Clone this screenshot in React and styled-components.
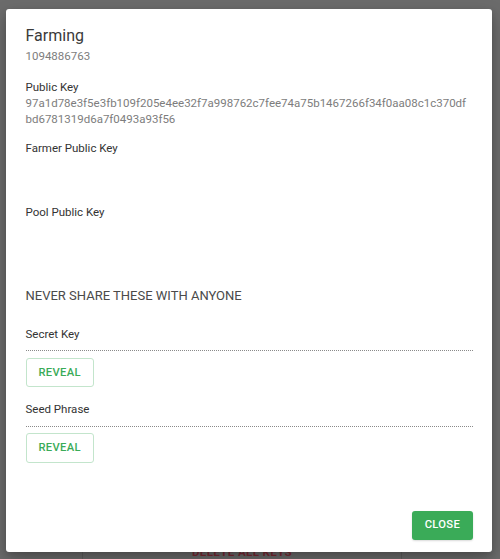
import React from "react";
import styled, { createGlobalStyle } from "styled-components";

const GlobalStyle = createGlobalStyle`
  html, body {
    margin: 0;
    padding: 0;
    width: 500px;
    height: 559px;
    overflow: hidden;
    font-family: Roboto, "Liberation Sans", Arial, sans-serif;
  }
`;

const keys = {
    fingerprint: "1094886763",
    publicKey: "97a1d78e3f5e3fb109f205e4ee32f7a998762c7fee74a75b1467266f34f0aa08c1c370dfbd6781319d6a7f0493a93f56",
};

const App = () => {
    return (
        <React.Fragment>
            <GlobalStyle/>
            <Backdrop>
                <BehindCard>
                    <DangerText>Delete All Keys</DangerText>
                </BehindCard>
                <Dialog>
                    <Content>
                        <Title>Farming</Title>
                        <Subtitle>{keys.fingerprint}</Subtitle>

                        <Section>
                            <Label>Public Key</Label>
                            <Value>{keys.publicKey}</Value>
                        </Section>
                        <Section>
                            <Label>Farmer Public Key</Label>
                            <Value empty/>
                        </Section>
                        <Section>
                            <Label>Pool Public Key</Label>
                            <Value empty/>
                        </Section>

                        <Warning>NEVER SHARE THESE WITH ANYONE</Warning>

                        <SecretRow first>
                            <Label>Secret Key</Label>
                            <Dotted/>
                            <RevealButton>Reveal</RevealButton>
                        </SecretRow>
                        <SecretRow>
                            <Label>Seed Phrase</Label>
                            <Dotted/>
                            <RevealButton>Reveal</RevealButton>
                        </SecretRow>
                    </Content>
                    <Actions>
                        <CloseButton>Close</CloseButton>
                    </Actions>
                </Dialog>
            </Backdrop>
        </React.Fragment>
    );
};

const Backdrop = styled.div`
  position: fixed;
  inset: 0;
  background-color: #6b6b6b;
`;

const BehindCard = styled.div`
  position: absolute;
  left: 82px;
  top: 530px;
  width: 320px;
  height: 40px;
  border-left: 1px solid #5d5d5d;
  border-right: 1px solid #5d5d5d;
  display: flex;
  justify-content: center;
  padding-top: 15px;
  box-sizing: border-box;
`;

const DangerText = styled.span`
  font-size: 11.5px;
  line-height: 14px;
  font-weight: 700;
  letter-spacing: 0.4px;
  text-transform: uppercase;
  color: #7a2a35;
`;

const Dialog = styled.div`
  position: absolute;
  left: 6px;
  top: 9px;
  width: 486px;
  height: 543px;
  background: #fff;
  border-radius: 3px;
  box-shadow: 0 9px 20px rgba(0, 0, 0, 0.22), 0 3px 6px rgba(0, 0, 0, 0.15);
  display: flex;
  flex-direction: column;
  box-sizing: border-box;
`;

const Content = styled.div`
  flex: 1;
  padding: 14px 19.5px 0;
  display: flex;
  flex-direction: column;
`;

const Title = styled.div`
  font-size: 16px;
  line-height: 25px;
  font-weight: 400;
  color: #3a3a3a;
`;

const Subtitle = styled.div`
  font-size: 11.5px;
  line-height: 16px;
  color: #7d7d7d;
`;

const Section = styled.div`
  display: flex;
  flex-direction: column;
  margin-top: 14.5px;

  & + & {
    margin-top: 13px;
  }
`;

const Label = styled.div`
  font-size: 11.5px;
  line-height: 16px;
  color: #333;
`;

const Value = styled.div`
  font-size: 11.5px;
  line-height: 16px;
  color: #7d7d7d;
  max-width: 444px;
  word-break: break-all;
  min-height: ${props => (props.empty ? '35px' : 0)};
`;

const Warning = styled.div`
  margin-top: 31.5px;
  font-size: 13px;
  line-height: 20px;
  color: #4a4a4a;
`;

const SecretRow = styled.div`
  display: flex;
  flex-direction: column;
  align-items: flex-start;
  margin-top: ${props => (props.first ? '19.5px' : '14px')};
`;

const Dotted = styled.div`
  align-self: stretch;
  margin-top: 8.5px;
  border-top: 1px dotted #8a8a8a;
`;

const RevealButton = styled.button`
  margin-top: 6.5px;
  padding: 4px 12px;
  border: 1px solid #c3e5cc;
  border-radius: 3px;
  background: #fff;
  color: #3aab58;
  font-family: inherit;
  font-size: 11.2px;
  line-height: 19.6px;
  font-weight: 500;
  letter-spacing: 0.32px;
  text-transform: uppercase;
  cursor: pointer;
`;

const Actions = styled.div`
  display: flex;
  justify-content: flex-end;
  padding: 0 19.5px 12.5px;
`;

const CloseButton = styled.button`
  padding: 4.6px 12.4px;
  border: none;
  border-radius: 3px;
  background-color: #3aab58;
  color: #fff;
  font-family: inherit;
  font-size: 11.2px;
  line-height: 19.6px;
  font-weight: 500;
  letter-spacing: 0.32px;
  text-transform: uppercase;
  cursor: pointer;
  box-shadow: 0 1px 2px rgba(0, 0, 0, 0.15);
`;

export default App;
